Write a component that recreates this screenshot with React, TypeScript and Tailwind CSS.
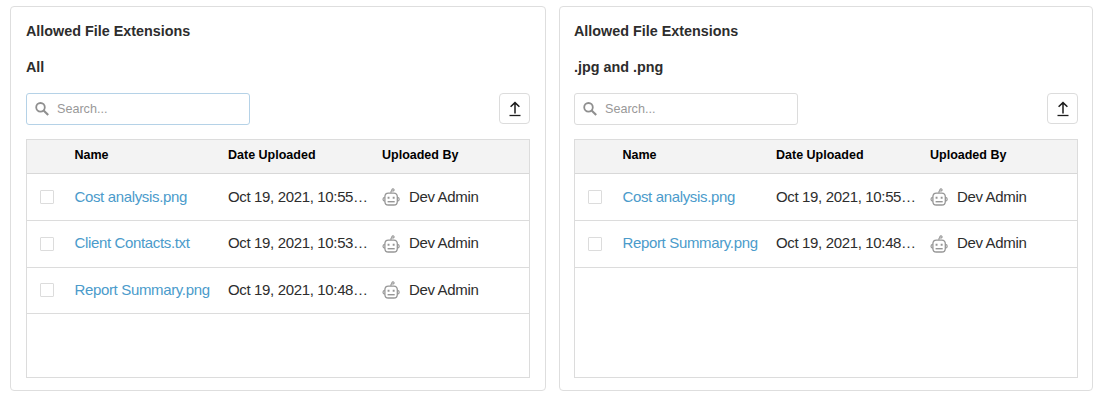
type FileRow = { name: string; date: string };

type PanelProps = {
  extensions: string;
  files: FileRow[];
  focused?: boolean;
};

const costAnalysis = { name: "Cost analysis.png", date: "Oct 19, 2021, 10:55…" };
const clientContacts = { name: "Client Contacts.txt", date: "Oct 19, 2021, 10:53…" };
const reportSummary = { name: "Report Summary.png", date: "Oct 19, 2021, 10:48…" };

function SearchIcon() {
  return (
    <svg className="h-[15px] w-[15px] shrink-0" viewBox="0 0 15 15" fill="none" stroke="#8f8f8f">
      <circle cx="5.5" cy="5.3" r="4.3" strokeWidth="1.8" />
      <path d="M8.6 8.4 13.2 13" strokeWidth="2.1" />
    </svg>
  );
}

function UploadIcon() {
  return (
    <svg className="h-4 w-3.5" viewBox="0 0 14 16" fill="none" stroke="#1c1c1c">
      <path d="M7 1.6V12.6M2.6 5.8 7 1.6l4.4 4.2" strokeWidth="1.5" />
      <path d="M1.5 14.5H12.5" strokeWidth="1.3" />
    </svg>
  );
}

function RobotIcon() {
  return (
    <svg className="h-[18px] w-[18px] shrink-0" viewBox="0 0 18 18" fill="none" stroke="#969696">
      <path
        d="M6.4 5.2h5.4q3.5 0 3.5 3.6v4.6q0 3.6-3.5 3.6H6.4q-3.5 0-3.5-3.6V8.8q0-3.6 3.5-3.6Z"
        strokeWidth="1.3"
      />
      <path d="M2.8 9.3Q1 9.4 1 11.2t1.8 1.9M15.4 9.3q1.8.1 1.8 1.9t-1.8 1.9" strokeWidth="1.2" />
      <path d="M9 5Q8.5 3.3 9.8 2.6M9.8 2.8q-.3-1.7 1.2-1.9 1.2.1 1.1 1.2-.3 1.2-2.3.7Z" strokeWidth="1.1" />
      <path d="M5.6 9.8h1.9M10.7 9.8h1.9" strokeWidth="2" />
      <path d="M5.6 13.7h7.1" strokeWidth="1.4" />
    </svg>
  );
}

function Panel({ extensions, files, focused = false }: PanelProps) {
  return (
    <section
      className={`flex h-[385px] flex-col rounded-[4px] border border-[#dedede] pt-[14px] text-[14.35px] text-[#2d2d2d] ${
        focused ? "px-[15px]" : "px-[14px]"
      }`}
    >
      <h2 className="h-9 font-bold leading-5">Allowed File Extensions</h2>
      <h3 className="h-9 font-bold leading-5">{extensions}</h3>
      <div className="flex items-start justify-between">
        <label
          className={`flex h-8 w-56 items-center gap-[7px] rounded-[3px] border pl-2 ${
            focused ? "border-[#b5d2e7]" : "border-[#dcdcdc]"
          }`}
        >
          <SearchIcon />
          <input
            className="w-44 bg-transparent text-[12.6px] outline-none placeholder:text-[#999]"
            placeholder="Search..."
          />
        </label>
        <button
          aria-label="Upload"
          className="flex h-[31px] w-[31px] items-center justify-center rounded-[4px] border border-[#dcdcdc]"
        >
          <UploadIcon />
        </button>
      </div>
      <div className="mt-[14px] h-[239px] border border-[#dcdcdc]">
        <div className="grid h-[34px] grid-cols-[47.5px_153.5px_154px_1fr] border-b border-[#d8d8d8] bg-[#f3f3f3] pt-[5px] text-[12.5px] font-bold leading-5 text-black">
          <span />
          <span>Name</span>
          <span>Date Uploaded</span>
          <span>Uploaded By</span>
        </div>
        {files.map((file) => (
          <div
            key={file.name}
            className="grid h-[46.8px] grid-cols-[47.5px_153.5px_154px_1fr] items-center border-b border-[#dcdcdc] text-[15px] tracking-[-0.35px]"
          >
            <span className="ml-[13px] h-3.5 w-3.5 rounded-[1px] border border-[#dcdcdc]" />
            <a className="text-[#4b9bcb]">{file.name}</a>
            <span className="whitespace-nowrap">{file.date}</span>
            <span className="flex items-center gap-[9px] whitespace-nowrap">
              <RobotIcon />
              Dev Admin
            </span>
          </div>
        ))}
      </div>
    </section>
  );
}

export default function App() {
  return (
    <main className="grid h-[402px] w-[1102px] grid-cols-[536px_534px] gap-[13px] bg-white pl-[10px] pt-[6px] font-['Liberation_Sans',Arial,sans-serif]">
      <Panel extensions="All" files={[costAnalysis, clientContacts, reportSummary]} focused />
      <Panel extensions=".jpg and .png" files={[costAnalysis, reportSummary]} />
    </main>
  );
}
